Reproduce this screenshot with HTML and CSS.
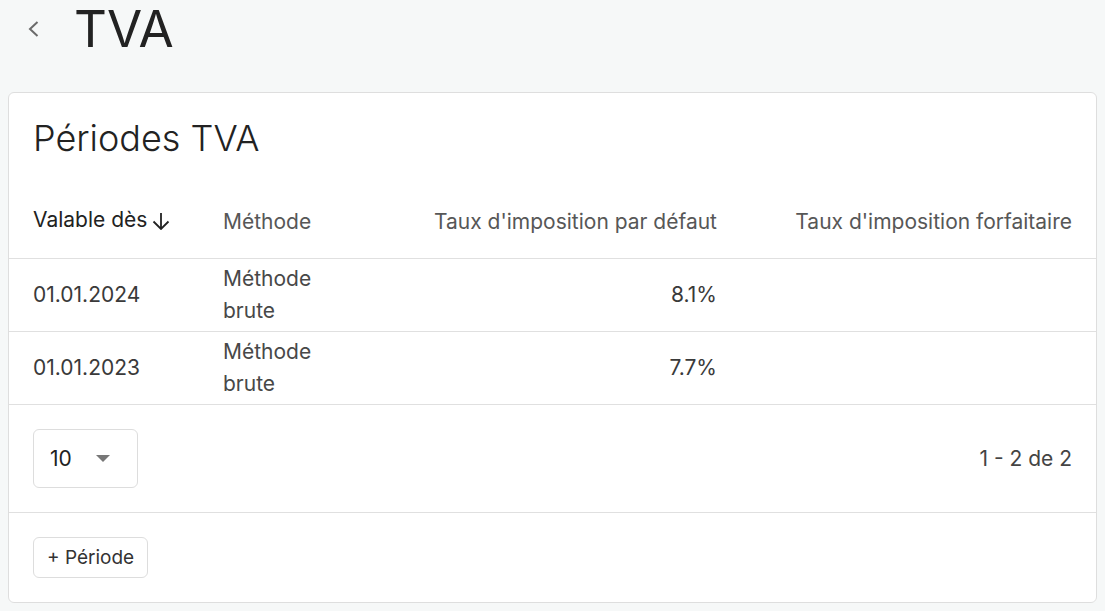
FILE: index.html
```html
<!DOCTYPE html>
<html lang="fr">
<head>
  <meta charset="UTF-8">
  <title>TVA</title>
  <link rel="stylesheet" href="styles.css">
</head>
<body>
  <div class="page-head">
    <a class="back" href="#">
      <svg width="14" height="18" viewBox="0 0 14 18"><path d="M11.5 2 L4 9 L11.5 16" fill="none" stroke="#6b6b6b" stroke-width="2"/></svg>
    </a>
    <h1>TVA</h1>
  </div>

  <div class="card">
    <h2>Périodes TVA</h2>
    <table>
      <colgroup>
        <col class="c-date">
        <col class="c-method">
        <col class="c-rate">
        <col class="c-flat">
      </colgroup>
      <thead>
        <tr>
          <th class="sorted">Valable dès<span class="arrow">
            <svg width="18" height="18" viewBox="0 0 18 18"><path d="M9 1 V17 M1.5 9.5 L9 17 L16.5 9.5" fill="none" stroke="#222" stroke-width="1.8"/></svg>
          </span></th>
          <th>Méthode</th>
          <th class="num">Taux d'imposition par défaut</th>
          <th class="num">Taux d'imposition forfaitaire</th>
        </tr>
      </thead>
      <tbody>
        <tr>
          <td>01.01.2024</td>
          <td class="method">Méthode brute</td>
          <td class="num">8.1%</td>
          <td class="num"></td>
        </tr>
        <tr>
          <td>01.01.2023</td>
          <td class="method">Méthode brute</td>
          <td class="num">7.7%</td>
          <td class="num"></td>
        </tr>
      </tbody>
    </table>

    <div class="pager">
      <div class="select">
        <span>10</span>
        <span class="caret"></span>
      </div>
      <div class="count">1 - 2 de 2</div>
    </div>

    <div class="actions">
      <button>+ Période</button>
    </div>
  </div>
</body>
</html>
```

FILE: styles.css
```css
body {
  margin: 0;
  padding: 0 8px 8px;
  background: #f6f8f8;
  font-family: Inter, "Noto Sans", sans-serif;
  color: #333;
}
.page-head {
  display: flex;
  align-items: flex-start;
  height: 92px;
  padding-left: 18px;
  box-sizing: border-box;
}
.back {
  display: flex;
  align-items: center;
  height: 58px;
  margin-right: 34px;
}
h1 {
  margin: 0;
  font-size: 51px;
  font-weight: 400;
  color: #222;
  line-height: 58px;
}
.card {
  background: #fff;
  border: 1px solid #dedede;
  border-radius: 6px;
}
h2 {
  margin: 0;
  padding: 23px 24px 0;
  font-size: 36px;
  font-weight: 300;
  color: #222;
  line-height: 44px;
}
table {
  width: 100%;
  table-layout: fixed;
  border-collapse: collapse;
  margin-top: 24px;
}
.c-date { width: 202px; }
.c-method { width: 119px; }
.c-rate { width: 399px; }
th, td {
  text-align: left;
  padding: 0 12px;
  font-size: 21px;
  font-weight: 400;
}
th:first-child, td:first-child {
  padding-left: 24px;
}
th:last-child, td:last-child {
  padding-right: 24px;
}
th {
  color: #575757;
  height: 74px;
  vertical-align: middle;
  white-space: nowrap;
}
th.sorted {
  color: #222;
}
.arrow {
  display: inline-block;
  margin-left: 5px;
  vertical-align: -3px;
}
td {
  border-top: 1px solid #e0e0e0;
  height: 72px;
  color: #3a3a3a;
  line-height: 32px;
}
td.method {
  color: #484848;
}
.num {
  text-align: right;
}
tbody tr:last-child td {
  border-bottom: 1px solid #e0e0e0;
}
.pager {
  display: flex;
  align-items: center;
  justify-content: space-between;
  padding: 24px;
  border-bottom: 1px solid #e0e0e0;
}
.select {
  display: flex;
  align-items: center;
  width: 105px;
  height: 59px;
  box-sizing: border-box;
  border: 1px solid #ddd;
  border-radius: 6px;
  padding-left: 16px;
  font-size: 21px;
  color: #222;
}
.caret {
  width: 0;
  height: 0;
  margin-left: 24px;
  border-left: 7px solid transparent;
  border-right: 7px solid transparent;
  border-top: 7px solid #777;
}
.count {
  font-size: 21px;
  color: #444;
}
.actions {
  padding: 24px;
}
button {
  font-family: inherit;
  font-size: 19px;
  color: #333;
  background: #fff;
  border: 1px solid #ddd;
  border-radius: 6px;
  height: 41px;
  padding: 0 13px;
}
```
